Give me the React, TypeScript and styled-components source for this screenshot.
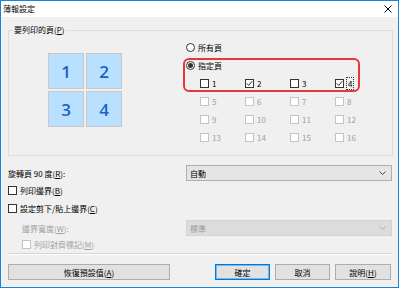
import React from "react";
import styled, { createGlobalStyle, css } from "styled-components";

const GlobalStyle = createGlobalStyle`
  html, body { margin: 0; padding: 0; background: #fff; }
  body {
    font-family: "Noto Sans CJK TC", "Noto Sans", sans-serif;
    font-size: 8px;
    color: #000;
  }
`;

const Window = styled.div`
  box-sizing: border-box;
  width: 399px;
  height: 288px;
  border: 1px solid #1883d7;
  background: #f0f0f0;
  display: flex;
  flex-direction: column;
`;

const TitleBar = styled.div`
  flex-shrink: 0;
  height: 16px;
  background: #fff;
  display: flex;
  align-items: center;
  justify-content: space-between;
  padding: 0 6px 0 2px;
  line-height: 16px;
`;

const Body = styled.div`
  flex: 1;
  padding: 7px 5px 0 7px;
  display: flex;
  flex-direction: column;
`;

const Group = styled.fieldset`
  margin: 0;
  padding: 0;
  min-width: 0;
  border: 1px solid #dcdcdc;
`;

const Legend = styled.legend`
  margin-left: 4px;
  padding: 0 1px;
  line-height: 12px;
`;

const GroupInner = styled.div`
  display: flex;
  padding-bottom: 9px;
`;

const LeftPane = styled.div`
  box-sizing: border-box;
  width: 174px;
  padding: 17px 0 0 39px;
`;

const Tiles = styled.div`
  display: grid;
  grid-template-columns: repeat(2, 36px);
  grid-auto-rows: 36px;
  gap: 2px;
`;

const Tile = styled.div`
  box-sizing: border-box;
  background: #b9e1ff;
  border: 1px solid #c8c8c8;
  display: flex;
  align-items: center;
  justify-content: center;
  font-family: "Open Sans", "Noto Sans", sans-serif;
  font-size: 17px;
  font-weight: 600;
  color: #1b5fc9;
`;

const RightPane = styled.div`
  position: relative;
  flex: 1;
  padding: 2px 0 0 3px;
`;

const Row = styled.div`
  height: 18px;
  display: flex;
  align-items: center;
  gap: 3px;
`;

const RadioDot = styled.span<{ $on?: boolean }>`
  box-sizing: border-box;
  width: 9px;
  height: 9px;
  border-radius: 50%;
  border: 1px solid #333;
  background: #fff;
  display: inline-flex;
  align-items: center;
  justify-content: center;
  ${(p) =>
    p.$on &&
    css`
      &::after {
        content: "";
        width: 5px;
        height: 5px;
        border-radius: 50%;
        background: #333;
      }
    `}
`;

const CheckGrid = styled.div`
  display: grid;
  grid-template-columns: repeat(4, 45px);
  grid-auto-rows: 18px;
  padding-left: 14px;
`;

const CheckItem = styled.label<{ $disabled?: boolean; $indent?: number; $h?: number }>`
  display: flex;
  align-items: center;
  gap: 3px;
  height: ${(p) => p.$h ?? 18}px;
  padding-left: ${(p) => p.$indent ?? 0}px;
  color: ${(p) => (p.$disabled ? "#a0a0a0" : "#000")};
  font-family: "Noto Sans CJK TC", "Noto Sans", sans-serif;
`;

const Box = styled.span<{ $disabled?: boolean }>`
  box-sizing: border-box;
  width: 9px;
  height: 9px;
  flex-shrink: 0;
  background: #fff;
  border: 1px solid ${(p) => (p.$disabled ? "#c4c4c4" : "#333")};
  display: inline-flex;
`;

const FocusText = styled.span`
  outline: 1px dotted #333;
  padding: 0 1px;
  line-height: 10px;
`;

const Marker = styled.div`
  position: absolute;
  left: 0;
  top: 22px;
  box-sizing: border-box;
  width: 177px;
  height: 34px;
  border: 2px solid #e4383c;
  border-radius: 6px;
  pointer-events: none;
`;

const FieldRow = styled.div<{ $indent?: number; $disabled?: boolean; $mt?: number }>`
  display: grid;
  grid-template-columns: ${(p) => 178 - (p.$indent ?? 0)}px 206px;
  align-items: center;
  height: 16px;
  margin-top: ${(p) => p.$mt ?? 0}px;
  padding-left: ${(p) => p.$indent ?? 0}px;
  color: ${(p) => (p.$disabled ? "#a0a0a0" : "#000")};
`;

const Select = styled.div<{ $disabled?: boolean }>`
  box-sizing: border-box;
  height: 16px;
  display: flex;
  align-items: center;
  justify-content: space-between;
  padding: 0 5px 0 3px;
  border: 1px solid ${(p) => (p.$disabled ? "#d3d3d3" : "#adadad")};
  background: ${(p) => (p.$disabled ? "#dcdcdc" : "#e5e5e5")};
  color: ${(p) => (p.$disabled ? "#9a9a9a" : "#000")};
`;

const Separator = styled.div`
  margin-top: 1px;
  height: 1px;
  background: #d5d5d5;
  border-bottom: 1px solid #fff;
  margin-right: 1px;
`;

const ButtonRow = styled.div`
  display: flex;
  justify-content: space-between;
  margin-top: 9px;
  margin-right: 2px;
`;

const ButtonGroup = styled.div`
  display: flex;
  gap: 5px;
`;

const Button = styled.button<{ $w: number; $primary?: boolean }>`
  box-sizing: border-box;
  width: ${(p) => p.$w}px;
  height: 16px;
  padding: 0;
  margin: 0;
  font: inherit;
  color: #000;
  background: #e1e1e1;
  border: 1px solid ${(p) => (p.$primary ? "#0078d7" : "#adadad")};
  ${(p) =>
    p.$primary &&
    css`
      box-shadow: inset 0 0 0 1px #7ab7ea;
    `}
`;

const Chevron = ({ color }: { color: string }) => (
  <svg width="7" height="4" viewBox="0 0 7 4">
    <polyline points="0.5,0.5 3.5,3.5 6.5,0.5" fill="none" stroke={color} strokeWidth="1" />
  </svg>
);

const CheckMark = () => (
  <svg width="7" height="7" viewBox="0 0 7 7">
    <polyline points="0.8,3.4 2.7,5.4 6.2,1.2" fill="none" stroke="#333" strokeWidth="1" />
  </svg>
);

const Checkbox = ({
  checked,
  disabled,
  children,
  indent,
  h,
}: {
  checked?: boolean;
  disabled?: boolean;
  children: React.ReactNode;
  indent?: number;
  h?: number;
}) => (
  <CheckItem $disabled={disabled} $indent={indent} $h={h}>
    <Box $disabled={disabled}>{checked && <CheckMark />}</Box>
    <span>{children}</span>
  </CheckItem>
);

export default function App() {
  const pages = Array.from({ length: 16 }, (_, i) => i + 1);
  return (
    <>
      <GlobalStyle />
      <Window>
        <TitleBar>
          <span>薄報設定</span>
          <svg width="8" height="8" viewBox="0 0 8 8">
            <path d="M0.5 0.5 L7.5 7.5 M7.5 0.5 L0.5 7.5" stroke="#000" strokeWidth="1" />
          </svg>
        </TitleBar>
        <Body>
          <Group>
            <Legend>
              要列印的頁(<u>P</u>)
            </Legend>
            <GroupInner>
              <LeftPane>
                <Tiles>
                  {[1, 2, 3, 4].map((n) => (
                    <Tile key={n}>{n}</Tile>
                  ))}
                </Tiles>
              </LeftPane>
              <RightPane>
                <Row>
                  <RadioDot />
                  <span>所有頁</span>
                </Row>
                <Row>
                  <RadioDot $on />
                  <span>指定頁</span>
                </Row>
                <CheckGrid>
                  {pages.map((n) => (
                    <Checkbox key={n} checked={n === 2 || n === 4} disabled={n > 4}>
                      {n === 4 ? <FocusText>4</FocusText> : n}
                    </Checkbox>
                  ))}
                </CheckGrid>
                <Marker />
              </RightPane>
            </GroupInner>
          </Group>

          <FieldRow $mt={9}>
            <span>
              旋轉頁 90 度(<u>R</u>):
            </span>
            <Select>
              <span>自動</span>
              <Chevron color="#444" />
            </Select>
          </FieldRow>

          <Checkbox>
            列印邊界(<u>B</u>)
          </Checkbox>
          <Checkbox h={19}>
            設定剪下/貼上邊界(<u>C</u>)
          </Checkbox>

          <FieldRow $mt={2} $indent={14} $disabled>
            <span>
              邊界寬度(<u>W</u>):
            </span>
            <Select $disabled>
              <span>標準</span>
              <Chevron color="#b0b0b0" />
            </Select>
          </FieldRow>
          <Checkbox disabled indent={14} h={16}>
            列印對齊標記(<u>M</u>)
          </Checkbox>

          <Separator />

          <ButtonRow>
            <Button $w={162}>
              恢復預設值(<u>A</u>)
            </Button>
            <ButtonGroup>
              <Button $w={55} $primary>
                確定
              </Button>
              <Button $w={55}>取消</Button>
              <Button $w={56}>
                說明(<u>H</u>)
              </Button>
            </ButtonGroup>
          </ButtonRow>
        </Body>
      </Window>
    </>
  );
}
